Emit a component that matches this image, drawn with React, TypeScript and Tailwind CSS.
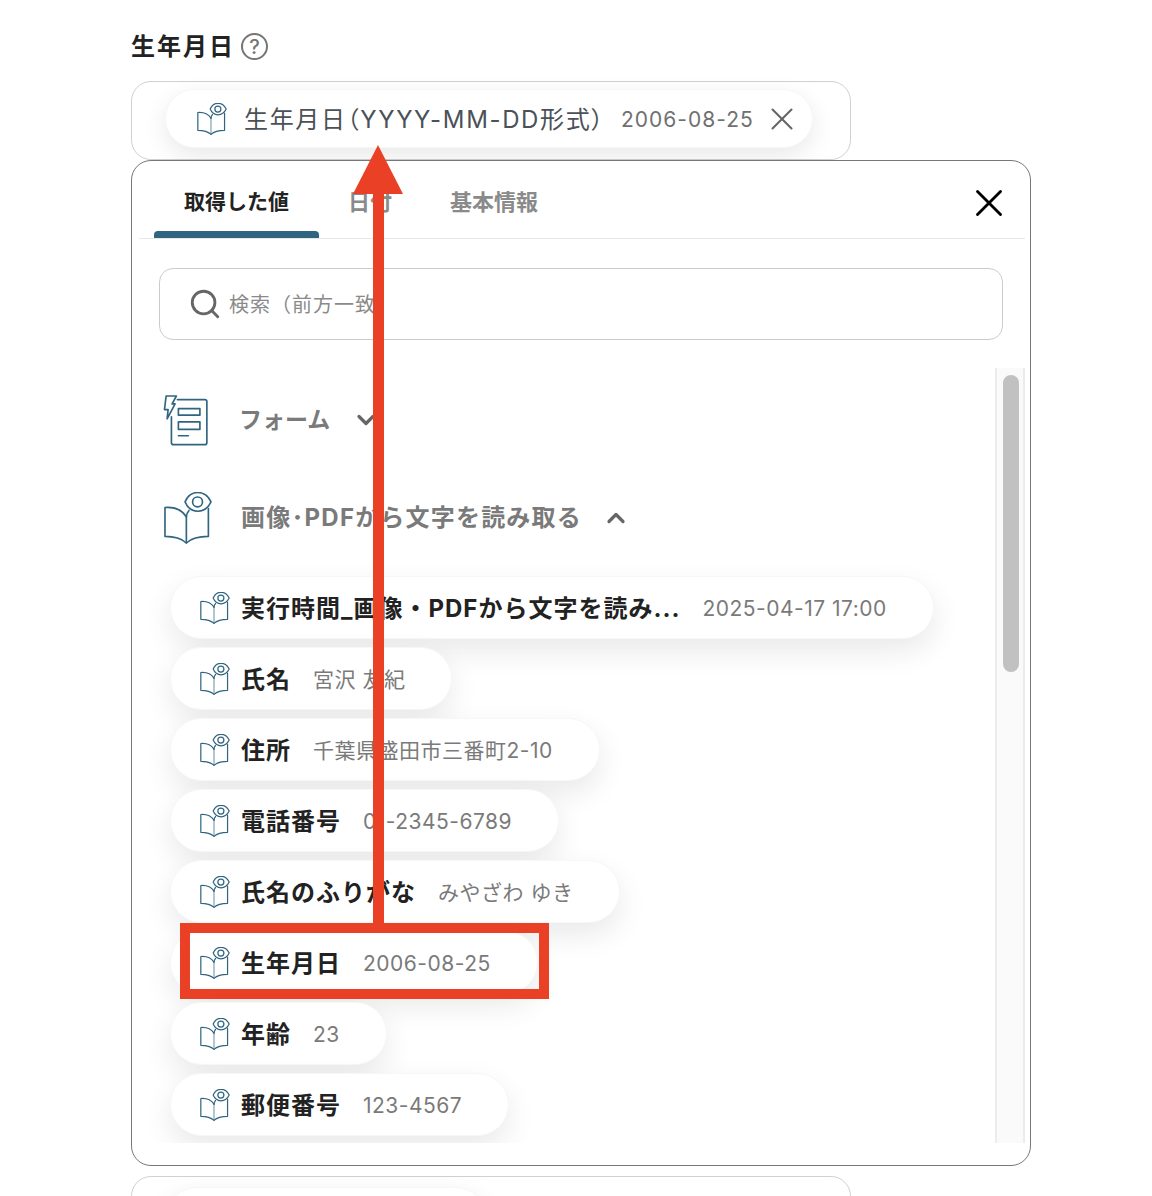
import { ChevronDown, ChevronUp, Search, X } from 'lucide-react'

const font = { fontFamily: 'Inter, "Noto Sans CJK JP", "Noto Sans", sans-serif' }

const pills = [
  { label: '実行時間_画像・PDFから文字を読み...', value: '2025-04-17 17:00' },
  { label: '氏名', value: '宮沢 友紀' },
  { label: '住所', value: '千葉県盛田市三番町2-10' },
  { label: '電話番号', value: '01-2345-6789' },
  { label: '氏名のふりがな', value: 'みやざわ ゆき' },
  { label: '生年月日', value: '2006-08-25' },
  { label: '年齢', value: '23' },
  { label: '郵便番号', value: '123-4567' },
]

function BookIcon({ className, small = false }: { className: string; small?: boolean }) {
  return (
    <svg viewBox="0 0 146 158" fill="none" stroke="#30657f" strokeWidth={small ? 6 : 5} strokeLinejoin="round" strokeLinecap="round" className={className}>
      <path d="M68 75C55 55 30 45 3 47V135C30 135 55 143 68 155C81 143 108 135 135 135V50" />
      <path d="M68 75V155" strokeOpacity={small ? 0.6 : 1} />
      <path d="M68 75C68 68 71 62 76 56" />
      <path d="M64 30C80 -8 125 -8 143 30C125 68 80 68 64 30Z" />
      <circle cx="102" cy="30" r="15" />
    </svg>
  )
}

function FormIcon() {
  return (
    <svg viewBox="0 0 136 154" fill="none" stroke="#30657f" strokeWidth="5" strokeLinejoin="round" strokeLinecap="round" className="h-[51px] w-[46px]">
      <path d="M42 14H125a6 6 0 0 1 6 6V144a6 6 0 0 1-6 6H30a6 6 0 0 1-6-6V66" />
      <rect x="45" y="41" width="65" height="20" />
      <rect x="45" y="81" width="65" height="23" />
      <path d="M45 123H75" />
      <path d="M8 3H39L26 27H35L11 72L14 44H3Z" />
    </svg>
  )
}

function Pill({ label, value }: { label: string; value: string }) {
  return (
    <div className="flex h-[63px] w-fit items-center rounded-full border border-[#f7f7f7] bg-white pl-[29px] pr-[46px] shadow-[0_12px_30px_rgba(0,0,0,0.09)]">
      <BookIcon className="h-[32px] w-[30px] shrink-0" small />
      <span className="ml-[11px] whitespace-nowrap pt-[2px] text-[24px] font-bold tracking-[1px] text-[#222222]">{label}</span>
      <span className="ml-[22px] whitespace-nowrap pt-[2px] text-[21px] tracking-[0.5px] text-[#7a7a7a]">{value}</span>
    </div>
  )
}

export default function App() {
  return (
    <div style={font} className="relative h-[1196px] w-[1152px] overflow-hidden bg-white pl-[131px]">
      <div className="flex h-[81px] items-center gap-[6px] pt-[12px]">
        <span className="text-[24px] font-bold tracking-[2px] text-[#222222]">生年月日</span>
        <span className="flex size-[27px] items-center justify-center rounded-full border-2 border-[#757575] text-[20px] font-medium leading-none text-[#757575]">?</span>
      </div>

      <div className="h-[79px] w-[720px] rounded-[20px] border border-[#d0d0d0] pl-[33px] pt-[7px]">
        <div className="flex h-[59px] w-fit items-center rounded-full border border-[#f7f7f7] bg-white pl-[31px] pr-[11px] shadow-[0_8px_24px_rgba(0,0,0,0.09)]">
          <BookIcon className="h-[32px] w-[30px] shrink-0" small />
          <span className="ml-[17px] whitespace-nowrap pt-[2px] text-[24px] tracking-[1.65px] text-[#4a5158] [font-feature-settings:'palt']">生年月日（YYYY-MM-DD形式）</span>
          <span className="ml-[16px] whitespace-nowrap pt-[2px] text-[21px] tracking-[1px] text-[#707070]">2006-08-25</span>
          <X className="ml-[9px] size-[38px] shrink-0 text-[#666666]" strokeWidth={1.3} />
        </div>
      </div>

      <div className="h-[1006px] w-[900px] rounded-[20px] border border-[#777777] bg-white pl-[7px] pr-[5px]">
        <div className="flex h-[78px] items-stretch justify-between border-b border-[#e8e8e8]">
          <div className="flex pl-[15px]">
            <div className="flex w-[165px] flex-col items-center">
              <div className="flex flex-1 items-center pt-[12px] text-[21px] font-bold text-[#222222]">取得した値</div>
              <div className="h-[7px] w-full rounded-t-[4px] bg-[#30657f]" />
            </div>
            <div className="ml-[29px] flex items-center pt-[5px] text-[22px] font-bold text-[#8a8a8a]">日付</div>
            <div className="ml-[58px] flex items-center pt-[5px] text-[22px] font-bold text-[#8a8a8a]">基本情報</div>
          </div>
          <X className="mr-[13px] mt-[19px] size-[46px] text-black" strokeWidth={1.5} />
        </div>

        <div className="ml-[20px] mt-[29px] flex h-[72px] w-[844px] items-center rounded-[14px] border border-[#cccccc] pl-[28px]">
          <Search className="size-[34px] text-[#666666]" strokeWidth={2} />
          <span className="ml-[7px] pt-[2px] text-[20px] tracking-[1px] text-[#8a8a8a]">検索（前方一致）</span>
        </div>

        <div className="mt-[28px] flex h-[775px] overflow-hidden">
          <div className="w-[856px] shrink-0 overflow-hidden">
            <div className="mt-[26px] flex h-[52px] items-center pl-[24px]">
              <FormIcon />
              <span className="ml-[30px] text-[23px] font-bold text-[#7a7a7a]">フォーム</span>
              <ChevronDown className="ml-[22px] size-[28px] text-[#666666]" strokeWidth={2.8} />
            </div>
            <div className="mt-[46px] flex h-[52px] items-center pl-[25px]">
              <BookIcon className="h-[52px] w-[48px]" />
              <span className="ml-[29px] text-[24px] font-bold tracking-[1.2px] text-[#7a7a7a]">画像･PDFから文字を読み取る</span>
              <ChevronUp className="ml-[20px] size-[28px] text-[#666666]" strokeWidth={2.8} />
            </div>
            <div className="ml-[31px] mt-[32px] flex flex-col gap-[8px] pb-[40px]">
              {pills.map((pill) => (
                <Pill key={pill.label} label={pill.label} value={pill.value} />
              ))}
            </div>
          </div>
          <div className="w-[30px] shrink-0 border-x-2 border-[#ececec] bg-[#fafafa] pl-[6px] pt-[7px]">
            <div className="h-[297px] w-[16px] rounded-full bg-[#c1c1c1]" />
          </div>
        </div>
      </div>

      <div className="mt-[10px] h-[60px] w-[720px] rounded-t-[20px] border border-[#d0d0d0] pl-[34px] pt-[10px]">
        <div className="h-[60px] w-[320px] rounded-full border border-[#f7f7f7] bg-white shadow-[0_8px_24px_rgba(0,0,0,0.09)]" />
      </div>

      {/* annotation: arrow + highlight box */}
      <div className="absolute left-[180px] top-[923px] h-[76px] w-[369px] border-[10px] border-[#ea4025]" />
      <div className="absolute left-[373px] top-[190px] h-[735px] w-[11px] bg-[#ea4025]" />
      <svg className="absolute left-[353px] top-[145px] h-[49px] w-[50px]" viewBox="0 0 50 49">
        <path d="M25 0L50 49H0Z" fill="#ea4025" />
      </svg>
    </div>
  )
}
